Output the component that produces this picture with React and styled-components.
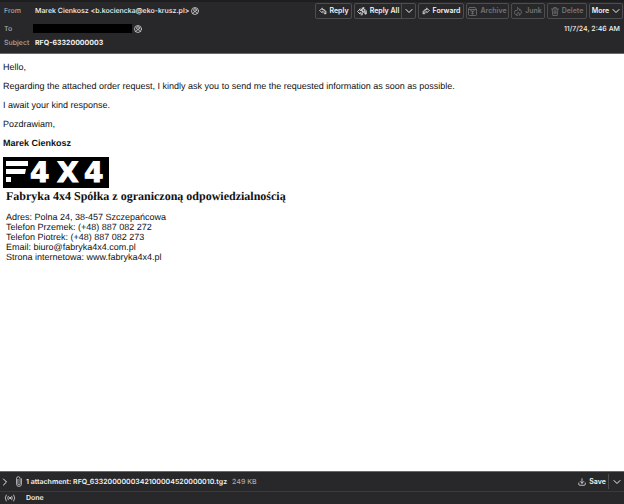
import React from 'react';
import styled, { createGlobalStyle, ThemeProvider } from 'styled-components';

const theme = {
	colors: {
		bar: '#28282a',
		line: '#3a3a3c',
		border: '#4d4d4f',
		text: '#f2f2f2',
		muted: '#a9a9ab',
		disabled: '#747476',
	},
	fonts: {
		ui: "Inter, 'Liberation Sans', sans-serif",
		mail: "'Liberation Sans', Arial, sans-serif",
		title: "Georgia, 'Liberation Serif', serif",
	},
};

const GlobalStyle = createGlobalStyle`
	* {
		box-sizing: border-box;
	}

	body {
		margin: 0;
		background-color: #fff;
		text-rendering: geometricPrecision;
	}

	button {
		font: inherit;
		color: inherit;
		background: none;
		border: none;
		padding: 0;
	}
`;

const Window = styled.div`
	min-height: 100vh;
	display: flex;
	flex-direction: column;
	font-family: ${({ theme }) => theme.fonts.ui};
	font-size: 7px;
	font-weight: 600;
	line-height: 10px;
	color: ${({ theme }) => theme.colors.text};
`;

const Header = styled.header`
	display: flex;
	justify-content: space-between;
	align-items: flex-start;
	height: 54px;
	padding-left: 4px;
	background-color: ${({ theme }) => theme.colors.bar};
	border-top: 2px solid #1e1e20;
	border-bottom: 1px solid #6a6a6a;
`;

const Fields = styled.dl`
	display: grid;
	grid-template-columns: 31px auto;
	grid-template-rows: 18px 17px 12px;
	align-items: center;
	margin: 0;
	white-space: nowrap;
`;

const Label = styled.dt`
	color: ${({ theme }) => theme.colors.muted};
	font-weight: 500;
`;

const Value = styled.dd`
	display: flex;
	align-items: center;
	gap: 2px;
	margin: 0;
	font-weight: ${({ $bold }) => ($bold ? 700 : 500)};
`;

const Redacted = styled.span`
	width: 99px;
	height: 9px;
	margin-left: -2px;
	background-color: #000;
`;

const Side = styled.div`
	display: flex;
	flex-direction: column;
	align-items: flex-end;
	gap: 5px;
	padding-top: 1px;
`;

const Toolbar = styled.div`
	display: flex;
	gap: 2px;
	padding-right: 1px;
`;

const Group = styled.div`
	display: flex;
	height: 16px;
	border: 1px solid ${({ theme }) => theme.colors.border};
	border-radius: 2px;
	color: ${({ theme, $disabled }) =>
		$disabled ? theme.colors.disabled : theme.colors.text};
`;

const ToolButton = styled.button`
	display: flex;
	align-items: center;
	justify-content: center;
	gap: 3px;
	width: ${({ $width }) => $width}px;
	white-space: nowrap;

	& + & {
		border-left: 1px solid ${({ theme }) => theme.colors.border};
	}
`;

const Time = styled.time`
	padding-right: 4px;
	font-weight: 500;
`;

const Message = styled.main`
	flex: 1;
	padding: 8px 3px;
	background-color: #fff;
	color: #111;
	font-family: ${({ theme }) => theme.fonts.mail};
	font-size: 9px;
	font-weight: 400;
`;

const Paragraph = styled.p`
	margin: 0 0 9px;
	font-weight: ${({ $bold }) => ($bold ? 700 : 400)};
`;

const LogoBox = styled.svg`
	display: block;
	width: 106px;
	height: 31px;
	overflow: visible;
	background-color: #000;
`;

const Company = styled.h1`
	margin: 2px 0 9px 3px;
	font-family: ${({ theme }) => theme.fonts.title};
	font-size: 12px;
	font-weight: 700;
	line-height: 13px;
`;

const Address = styled.address`
	margin-left: 3px;
	font-style: normal;
`;

const AttachmentBar = styled.section`
	display: flex;
	align-items: center;
	height: 20px;
	padding-left: 1px;
	background-color: ${({ theme }) => theme.colors.bar};
	border-top: 1px solid #6a6a6a;
	white-space: nowrap;
`;

const FileInfo = styled.span`
	flex: 1;
	margin-left: 3px;
`;

const Size = styled.span`
	margin-left: 5px;
	color: ${({ theme }) => theme.colors.muted};
	font-weight: 500;
`;

const Expand = styled.button`
	display: flex;
	width: 14px;
`;

const SaveGroup = styled.div`
	display: flex;
	height: 15px;
`;

const StatusBar = styled.footer`
	display: flex;
	align-items: center;
	gap: 10px;
	height: 13px;
	padding-left: 4px;
	background-color: ${({ theme }) => theme.colors.bar};
	border-top: 1px solid ${({ theme }) => theme.colors.line};
`;

const Glyph = styled.svg`
	flex: none;
	width: ${({ $w }) => $w || 8}px;
	height: ${({ $h }) => $h || 8}px;
	fill: none;
	stroke: currentColor;
	stroke-linecap: round;
	stroke-linejoin: round;
`;

const ContactIcon = () => (
	<Glyph viewBox="0 0 16 16" strokeWidth="1.6" opacity="0.85">
		<circle cx="8" cy="8" r="7" />
		<circle cx="8" cy="6" r="2.8" />
		<path d="M3.6 13c.3-2.2 1.8-3.4 4.4-3.4s4.1 1.2 4.4 3.4" />
	</Glyph>
);

const ReplyIcon = () => (
	<Glyph viewBox="0 0 16 16" strokeWidth="1.4">
		<path d="M6.5 2.5 1 7l5.5 4.5V9c3 0 4 1.5 4 4.5H14c.8-5-1.5-8.5-7.500-8.5z" />
		<path d="M9 5.5c3 .5 3.8 3 3.5 7.5" />
	</Glyph>
);

const ReplyAllIcon = () => (
	<Glyph viewBox="0 0 20 18" $w="10" $h="9" strokeWidth="1.5">
		<path d="M6 4 1 9l5 5v-3c1.5 0 2.5 1.5 2.5 5M6 4v3h2" />
		<path d="M13.5 1 8 6l5.500 5V8c2 0 2.500 1.500 2.500 6h2.500c1-6-.5-10-5-10z" />
		<path d="M10.5 1.5v14M14 5.500c2 .5 2.800 3 2.500 8" />
	</Glyph>
);

const ForwardIcon = () => (
	<Glyph viewBox="0 0 16 16" strokeWidth="1.4">
		<path d="M9.500 2.500 15 7l-5.500 4.500V9c-3 0-4 1.500-4 4.500H2C1.200 8.500 3.500 5 9.500 5z" />
		<path d="M7 6c-2.500.8-3.500 3-3.300 6.500" />
	</Glyph>
);

const ArchiveIcon = () => (
	<Glyph viewBox="0 0 18 18" $w="9" $h="9" strokeWidth="1.6">
		<path d="M3.500 1h11L17 5v10q0 2-2 2H3q-2 0-2-2V5zM1 5h16" />
		<path d="M6 5v3.500h6V5M9 9v5M6.500 12 9 14.500l2.500-2.500" />
	</Glyph>
);

const JunkIcon = () => (
	<Glyph viewBox="0 0 16 18" $h="9" strokeWidth="1.7">
		<path d="M6 16.500c-3-.8-5-2.800-5-5.500 0-2.500 1.500-3.500 2.500-5L5 8c2-2 3-4 2-7 2.500 1.500 4 3 4 6 1-.5 1.500-1 1.500-2 1.500 2 2.500 4 2 6.500-.5 2.700-2 4.300-4.500 5 1-2.500.5-4.500-1.500-6.200-1 1.700-3.500 3-2.500 6.200z" />
	</Glyph>
);

const TrashIcon = () => (
	<Glyph viewBox="0 0 16 18" $h="9" strokeWidth="1.5">
		<path d="M1 4h14M5.500 3.500V1h5v2.500M2.500 4.500 3.500 17h9l1-12.500" />
		<path d="M6 7.500v6M8 7.500v6M10 7.500v6" />
	</Glyph>
);

const ChevronDown = () => (
	<Glyph viewBox="0 0 16 16" strokeWidth="2">
		<path d="m2 5 6 6 6-6" />
	</Glyph>
);

const ChevronRight = () => (
	<Glyph viewBox="0 0 16 16" strokeWidth="2">
		<path d="m5 2 6 6-6 6" />
	</Glyph>
);

const PaperclipIcon = () => (
	<Glyph viewBox="0 0 14 20" $w="8" $h="11" strokeWidth="1.2">
		<path d="M11.500 5v9.500a4.500 4.500 0 0 1-9 0V4.500a3 3 0 0 1 6.500 0V14a2 2 0 0 1-4 0V6" />
	</Glyph>
);

const DownloadIcon = () => (
	<Glyph viewBox="0 0 16 16" strokeWidth="1.5">
		<path d="M8 1.500v9M4.500 7 8 10.500 11.500 7M1.500 10v2.500q0 2 2 2h9q2 0 2-2V10" />
	</Glyph>
);

const OnlineIcon = () => (
	<Glyph viewBox="0 0 24 16" $w="12" strokeWidth="1.4">
		<circle cx="12" cy="8" r="1.2" fill="currentColor" />
		<path d="M8.500 4.500q-2.500 3.500 0 7M15.500 4.500q2.500 3.500 0 7" />
		<path d="M4.500 2q-4.500 6 0 12M19.500 2q4.500 6 0 12" />
	</Glyph>
);

const Logo = () => (
	<LogoBox viewBox="0 0 106 31" role="img" aria-label="F4X4">
		<g fill="#fff">
			<path d="M3 4h22v5H3zM3 12h20l-1 5H3zM3 20h5v5H3z" />
			<text
				x="27 54 81"
				y="25"
				fontFamily="DejaVu Sans, sans-serif"
				fontSize="28"
				fontWeight="700"
				stroke="#fff"
				strokeWidth="1"
			>
				4X4
			</text>
		</g>
	</LogoBox>
);

const actions = [
	{ label: 'Reply', Icon: ReplyIcon, width: 35 },
	{ label: 'Reply All', Icon: ReplyAllIcon, width: 46, menu: true },
	{ label: 'Forward', Icon: ForwardIcon, width: 44 },
	{ label: 'Archive', Icon: ArchiveIcon, width: 41, disabled: true },
	{ label: 'Junk', Icon: JunkIcon, width: 32, disabled: true },
	{ label: 'Delete', Icon: TrashIcon, width: 38, disabled: true },
];

function MessageHeader() {
	return (
		<Header>
			<Fields>
				<Label>From</Label>
				<Value>
					Marek Cienkosz &lt;b.kociencka@eko-krusz.pl&gt;
					<ContactIcon />
				</Value>
				<Label>To</Label>
				<Value>
					<Redacted />
					<ContactIcon />
				</Value>
				<Label>Subject</Label>
				<Value $bold>RFQ-63320000003</Value>
			</Fields>
			<Side>
				<Toolbar>
					{actions.map(({ label, Icon, width, menu, disabled }) => (
						<Group key={label} $disabled={disabled}>
							<ToolButton $width={width} disabled={disabled}>
								<Icon />
								{label}
							</ToolButton>
							{menu && (
								<ToolButton $width={14} aria-label="Reply options">
									<ChevronDown />
								</ToolButton>
							)}
						</Group>
					))}
					<Group>
						<ToolButton $width={32}>
							More
							<ChevronDown />
						</ToolButton>
					</Group>
				</Toolbar>
				<Time>11/7/24, 2:46 AM</Time>
			</Side>
		</Header>
	);
}

function App() {
	return (
		<ThemeProvider theme={theme}>
			<GlobalStyle />
			<Window>
				<MessageHeader />
				<Message>
					<Paragraph>Hello,</Paragraph>
					<Paragraph>
						Regarding the attached order request, I kindly ask you to send me
						the requested information as soon as possible.
					</Paragraph>
					<Paragraph>I await your kind response.</Paragraph>
					<Paragraph>Pozdrawiam,</Paragraph>
					<Paragraph $bold>Marek Cienkosz</Paragraph>
					<Logo />
					<Company>Fabryka 4x4 Spółka z ograniczoną odpowiedzialnością</Company>
					<Address>
						Adres: Polna 24, 38-457 Szczepańcowa
						<br />
						Telefon Przemek: (+48) 887 082 272
						<br />
						Telefon Piotrek: (+48) 887 082 273
						<br />
						Email: biuro@fabryka4x4.com.pl
						<br />
						Strona internetowa: www.fabryka4x4.pl
					</Address>
				</Message>
				<AttachmentBar>
					<Expand aria-label="Show attachments">
						<ChevronRight />
					</Expand>
					<PaperclipIcon />
					<FileInfo>
						1 attachment: RFQ_6332000000342100004520000010.tgz
						<Size>249 KB</Size>
					</FileInfo>
					<SaveGroup>
						<ToolButton $width={32}>
							<DownloadIcon />
							Save
						</ToolButton>
						<ToolButton $width={16} aria-label="Save options">
							<ChevronDown />
						</ToolButton>
					</SaveGroup>
				</AttachmentBar>
				<StatusBar>
					<OnlineIcon />
					Done
				</StatusBar>
			</Window>
		</ThemeProvider>
	);
}

export default App;
